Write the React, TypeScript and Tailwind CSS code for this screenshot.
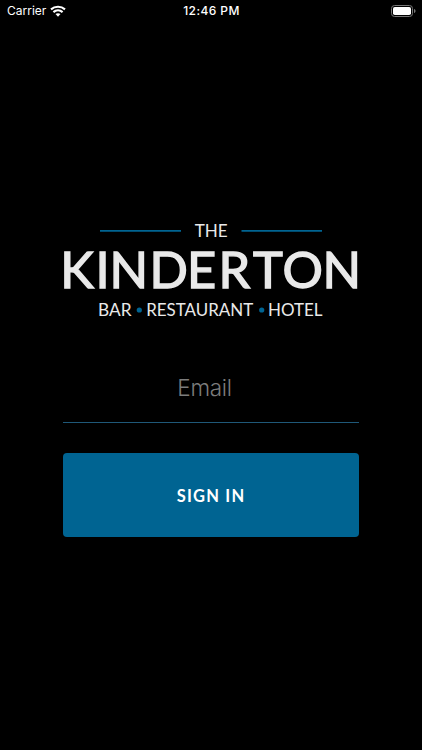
function StatusBar() {
  return (
    <header className="grid h-[22px] w-full grid-cols-3 items-center pl-[7px] pr-[6px] text-[12px]">
      <div className="flex items-center gap-1">
        <span>Carrier</span>
        <svg width="16" height="12" viewBox="0 0 16 12" fill="none" stroke="white" strokeWidth="2.1">
          <path d="M1 4.4C5 .8 11 .8 15 4.4M3.4 7.1c2.7-2.4 6.5-2.4 9.2 0" />
          <path d="M5.5 9.1c1.4-1.3 3.6-1.3 5 0L8 11.7z" fill="white" stroke="none" />
        </svg>
      </div>
      <span className="text-center font-medium tracking-[0.4px]">12:46 PM</span>
      <svg className="justify-self-end" width="25" height="12" viewBox="0 0 25 12">
        <rect x=".5" y=".5" width="21" height="11" rx="3" fill="none" stroke="#777" />
        <rect x="2" y="2" width="18" height="8" rx="1.8" fill="white" />
        <path d="M23 4c2 .6 2 3.4 0 4z" fill="#777" />
      </svg>
    </header>
  );
}

function Logo() {
  return (
    <svg className="overflow-visible font-['Lato',sans-serif]" width="298" height="104" viewBox="62 218 298 104" fill="#e9e9e9">
      <path d="M100 230.8h81M241.5 230.8h80.5" stroke="#006492" strokeWidth="1.8" />
      <text x="194.7" y="237" fontSize="17" textLength="33" lengthAdjust="spacingAndGlyphs">THE</text>
      <text x="60.2 95.4 109.4 149.4 187.1 218.4 252.9 282.6 322.6" y="288.4" fontSize="50.5" stroke="#e9e9e9" strokeWidth="1.4">KINDERTON</text>
      <text x="98" y="315.7" fontSize="17" textLength="33.5" lengthAdjust="spacingAndGlyphs">BAR</text>
      <circle cx="139.3" cy="310" r="2.6" fill="#006492" />
      <text x="146.2" y="315.7" fontSize="17" textLength="107" lengthAdjust="spacingAndGlyphs">RESTAURANT</text>
      <circle cx="261.7" cy="310" r="2.6" fill="#006492" />
      <text x="268" y="315.7" fontSize="17" textLength="54.5" lengthAdjust="spacingAndGlyphs">HOTEL</text>
    </svg>
  );
}

export default function App() {
  return (
    <main className="flex h-[750px] w-full flex-col items-center overflow-hidden bg-black font-['Inter',sans-serif] text-white">
      <StatusBar />
      <div className="mt-[196px]">
        <Logo />
      </div>
      <form className="mt-[31px] flex w-[296px] flex-col">
        <input
          type="email"
          placeholder="Email"
          className="h-[70px] border-b border-[#1f5878] bg-transparent pr-[13px] text-center text-[22.5px] font-light tracking-[-0.3px] outline-none placeholder:text-[#7c7c7c]"
        />
        <button
          type="button"
          className="mt-[30px] h-[84px] rounded-[4px] bg-[#006492] pt-[2px] font-['Lato',sans-serif] text-[16.5px] font-bold tracking-[1.2px] text-white"
        >
          SIGN IN
        </button>
      </form>
    </main>
  );
}
